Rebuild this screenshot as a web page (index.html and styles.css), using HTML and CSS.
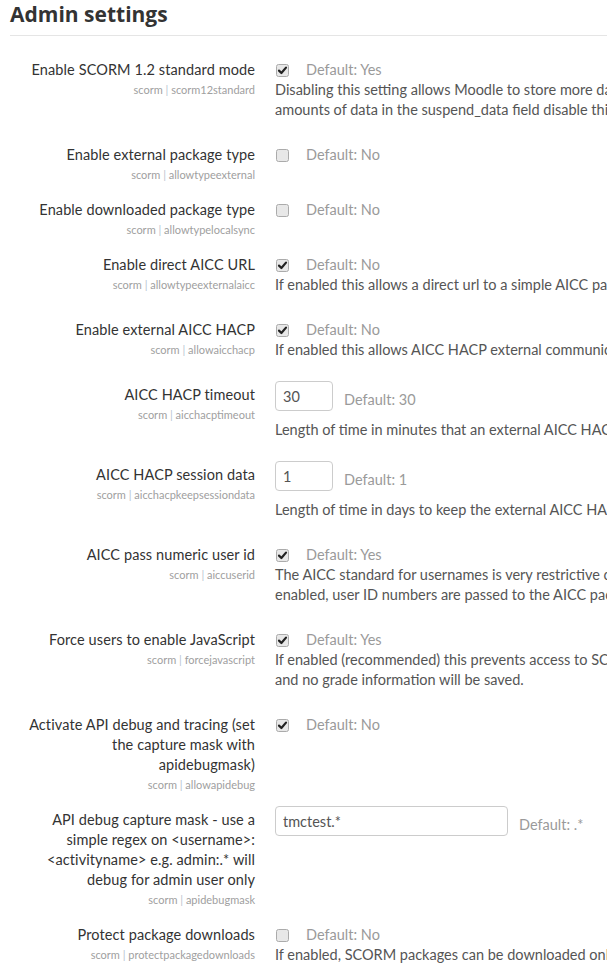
FILE: index.html
```html
<!DOCTYPE html>
<html>
<head>
<meta charset="utf-8">
<link rel="stylesheet" href="styles.css">
</head>
<body>
<div class="page">
  <h2 class="title">Admin settings</h2>
  <div class="settings">

    <div class="setting">
      <div class="label-col">
        <div class="label">Enable SCORM 1.2 standard mode</div>
        <div class="key">scorm <span class="pipe">|</span> scorm12standard</div>
      </div>
      <div class="control-col">
        <div class="ctl"><span class="cb"><svg width="13" height="13" viewBox="0 0 13 13"><rect x="0.5" y="0.5" width="12" height="12" rx="2" class="box"/><path d="M3 6.6 L5.4 9 L10 3.6" class="tick"/></svg></span><span class="default">Default: Yes</span></div>
        <div class="desc">
          <div class="line">Disabling this setting allows Moodle to store more data than the SCORM 1.2 specification allows. If your SCORM packages use large</div>
          <div class="line">amounts of data in the suspend_data field disable this setting.</div>
        </div>
      </div>
    </div>

    <div class="setting">
      <div class="label-col">
        <div class="label">Enable external package type</div>
        <div class="key">scorm <span class="pipe">|</span> allowtypeexternal</div>
      </div>
      <div class="control-col">
        <div class="ctl"><span class="cb"><svg width="13" height="13" viewBox="0 0 13 13"><rect x="0.5" y="0.5" width="12" height="12" rx="2" class="box"/></svg></span><span class="default">Default: No</span></div>
      </div>
    </div>

    <div class="setting">
      <div class="label-col">
        <div class="label">Enable downloaded package type</div>
        <div class="key">scorm <span class="pipe">|</span> allowtypelocalsync</div>
      </div>
      <div class="control-col">
        <div class="ctl"><span class="cb"><svg width="13" height="13" viewBox="0 0 13 13"><rect x="0.5" y="0.5" width="12" height="12" rx="2" class="box"/></svg></span><span class="default">Default: No</span></div>
      </div>
    </div>

    <div class="setting">
      <div class="label-col">
        <div class="label">Enable direct AICC URL</div>
        <div class="key">scorm <span class="pipe">|</span> allowtypeexternalaicc</div>
      </div>
      <div class="control-col">
        <div class="ctl"><span class="cb"><svg width="13" height="13" viewBox="0 0 13 13"><rect x="0.5" y="0.5" width="12" height="12" rx="2" class="box"/><path d="M3 6.6 L5.4 9 L10 3.6" class="tick"/></svg></span><span class="default">Default: No</span></div>
        <div class="desc">
          <div class="line">If enabled this allows a direct url to a simple AICC package</div>
        </div>
      </div>
    </div>

    <div class="setting">
      <div class="label-col">
        <div class="label">Enable external AICC HACP</div>
        <div class="key">scorm <span class="pipe">|</span> allowaicchacp</div>
      </div>
      <div class="control-col">
        <div class="ctl"><span class="cb"><svg width="13" height="13" viewBox="0 0 13 13"><rect x="0.5" y="0.5" width="12" height="12" rx="2" class="box"/><path d="M3 6.6 L5.4 9 L10 3.6" class="tick"/></svg></span><span class="default">Default: No</span></div>
        <div class="desc">
          <div class="line">If enabled this allows AICC HACP external communication without requiring user login and post requests from the same domain as Moodle</div>
        </div>
      </div>
    </div>

    <div class="setting">
      <div class="label-col">
        <div class="label">AICC HACP timeout</div>
        <div class="key">scorm <span class="pipe">|</span> aicchacptimeout</div>
      </div>
      <div class="control-col">
        <div class="ctl ctl-input"><input class="text short" type="text" value="30"><span class="default">Default: 30</span></div>
        <div class="desc desc-after-input">
          <div class="line">Length of time in minutes that an external AICC HACP session can remain open</div>
        </div>
      </div>
    </div>

    <div class="setting">
      <div class="label-col">
        <div class="label">AICC HACP session data</div>
        <div class="key">scorm <span class="pipe">|</span> aicchacpkeepsessiondata</div>
      </div>
      <div class="control-col">
        <div class="ctl ctl-input"><input class="text short" type="text" value="1"><span class="default">Default: 1</span></div>
        <div class="desc desc-after-input">
          <div class="line">Length of time in days to keep the external AICC HACP session data (a high setting will fill the table with old data but may be useful when debugging)</div>
        </div>
      </div>
    </div>

    <div class="setting">
      <div class="label-col">
        <div class="label">AICC pass numeric user id</div>
        <div class="key">scorm <span class="pipe">|</span> aiccuserid</div>
      </div>
      <div class="control-col">
        <div class="ctl"><span class="cb"><svg width="13" height="13" viewBox="0 0 13 13"><rect x="0.5" y="0.5" width="12" height="12" rx="2" class="box"/><path d="M3 6.6 L5.4 9 L10 3.6" class="tick"/></svg></span><span class="default">Default: Yes</span></div>
        <div class="desc">
          <div class="line">The AICC standard for usernames is very restrictive compared with Moodle, and allows for alphanumeric characters, dash and underscore only. If</div>
          <div class="line">enabled, user ID numbers are passed to the AICC package instead of usernames.</div>
        </div>
      </div>
    </div>

    <div class="setting">
      <div class="label-col">
        <div class="label">Force users to enable JavaScript</div>
        <div class="key">scorm <span class="pipe">|</span> forcejavascript</div>
      </div>
      <div class="control-col">
        <div class="ctl"><span class="cb"><svg width="13" height="13" viewBox="0 0 13 13"><rect x="0.5" y="0.5" width="12" height="12" rx="2" class="box"/><path d="M3 6.6 L5.4 9 L10 3.6" class="tick"/></svg></span><span class="default">Default: Yes</span></div>
        <div class="desc">
          <div class="line">If enabled (recommended) this prevents access to SCORM objects when JavaScript is not supported/enabled in a browser. If disabled the user may view the SCORM but API communication will fail</div>
          <div class="line">and no grade information will be saved.</div>
        </div>
      </div>
    </div>

    <div class="setting">
      <div class="label-col">
        <div class="label">Activate API debug and tracing (set<br>the capture mask with<br>apidebugmask)</div>
        <div class="key">scorm <span class="pipe">|</span> allowapidebug</div>
      </div>
      <div class="control-col">
        <div class="ctl"><span class="cb"><svg width="13" height="13" viewBox="0 0 13 13"><rect x="0.5" y="0.5" width="12" height="12" rx="2" class="box"/><path d="M3 6.6 L5.4 9 L10 3.6" class="tick"/></svg></span><span class="default">Default: No</span></div>
      </div>
    </div>

    <div class="setting">
      <div class="label-col">
        <div class="label">API debug capture mask - use a<br>simple regex on &lt;username&gt;:<br>&lt;activityname&gt; e.g. admin:.* will<br>debug for admin user only</div>
        <div class="key">scorm <span class="pipe">|</span> apidebugmask</div>
      </div>
      <div class="control-col">
        <div class="ctl ctl-input"><input class="text long" type="text" value="tmctest.*"><span class="default">Default: .*</span></div>
      </div>
    </div>

    <div class="setting">
      <div class="label-col">
        <div class="label">Protect package downloads</div>
        <div class="key">scorm <span class="pipe">|</span> protectpackagedownloads</div>
      </div>
      <div class="control-col">
        <div class="ctl"><span class="cb"><svg width="13" height="13" viewBox="0 0 13 13"><rect x="0.5" y="0.5" width="12" height="12" rx="2" class="box"/></svg></span><span class="default">Default: No</span></div>
        <div class="desc">
          <div class="line">If enabled, SCORM packages can be downloaded only if the package is a valid SCORM package.</div>
        </div>
      </div>
    </div>

  </div>
</div>
</body>
</html>
```

FILE: styles.css
```css
html, body {
  margin: 0;
  padding: 0;
  background: #ffffff;
  overflow: hidden;
}

.page {
  width: 1000px;
  padding-left: 10px;
  font-family: Lato, "Open Sans", sans-serif;
  font-size: 14.5px;
  color: #333333;
}

.title {
  margin: 0;
  font-family: "Open Sans", sans-serif;
  font-weight: 700;
  font-size: 21px;
  line-height: 28px;
  color: #333333;
  padding-bottom: 7px;
  border-bottom: 1px solid #e5e5e5;
}

.settings {
  padding-top: 20px;
}

.setting {
  display: grid;
  grid-template-columns: 245px 700px;
  column-gap: 20px;
  margin-bottom: 11px;
}

.label-col {
  text-align: right;
  padding-top: 4px;
}

.label {
  line-height: 20px;
  color: #333333;
  letter-spacing: 0.1px;
}

.key {
  font-size: 11px;
  line-height: 20px;
  color: #a0a0a0;
}

.pipe {
  color: #b8c4d0;
}

.control-col {
  display: flex;
  flex-direction: column;
}

.ctl {
  display: flex;
  align-items: center;
  height: 20px;
  margin-top: 4px;
}

.cb {
  display: flex;
  width: 13px;
  height: 13px;
  margin-left: 1px;
}

.box {
  fill: #e8e8e8;
  stroke: #ababab;
  stroke-width: 1;
}

.tick {
  fill: none;
  stroke: #222222;
  stroke-width: 2.2;
  stroke-linecap: round;
  stroke-linejoin: round;
}

.default {
  color: #9a9a9a;
  margin-left: 17px;
  line-height: 20px;
}

.ctl-input {
  height: 30px;
  margin-top: 0;
  align-items: flex-end;
}

.ctl-input .default {
  margin-left: 11px;
  padding-bottom: 1px;
}

.text {
  box-sizing: border-box;
  height: 30px;
  margin: 0;
  padding: 4px 7px;
  border: 1px solid #cccccc;
  border-radius: 4px;
  font-family: Lato, "Open Sans", sans-serif;
  font-size: 14.5px;
  color: #555555;
  background: #ffffff;
  outline: none;
}

.short {
  width: 58px;
}

.long {
  width: 233px;
}

.desc {
  color: #555555;
  line-height: 20px;
  margin-bottom: 10px;
}

.desc-after-input {
  margin-top: 9px;
}

.line {
  white-space: nowrap;
}
```
